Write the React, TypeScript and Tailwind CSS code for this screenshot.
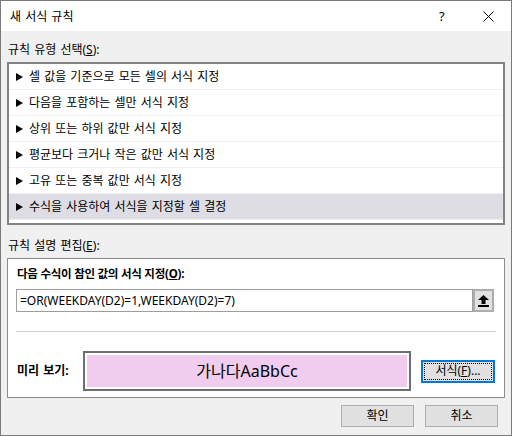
import React from 'react';

const rules = [
  '셀 값을 기준으로 모든 셀의 서식 지정',
  '다음을 포함하는 셀만 서식 지정',
  '상위 또는 하위 값만 서식 지정',
  '평균보다 크거나 작은 값만 서식 지정',
  '고유 또는 중복 값만 서식 지정',
  '수식을 사용하여 서식을 지정할 셀 결정',
];

const font = { fontFamily: '"Noto Sans", "Noto Sans CJK KR", sans-serif' };

const Arrow = () => (
  <svg width="7" height="8" viewBox="0 0 7 8" className="shrink-0">
    <polygon points="0,0 7,4 0,8" fill="#000" />
  </svg>
);

const UploadIcon = () => (
  <svg width="11" height="12" viewBox="0 0 11 12">
    <polygon points="5.5,0 0,5 3.5,5 3.5,9 7.5,9 7.5,5 11,5" fill="#000" />
    <rect x="0" y="10" width="11" height="2" fill="#000" />
  </svg>
);

export default function App() {
  return (
    <div
      className="w-[512px] h-[436px] flex flex-col bg-[#f0f0f0] border border-[#7a7a7a] text-[12px] text-black overflow-hidden [word-spacing:1px]"
      style={font}
    >
      {/* Title bar */}
      <div className="h-[30px] bg-white flex items-center pl-[9px] pr-[17px] shrink-0">
        <span className="flex-1 leading-none pt-[1px]">새 서식 규칙</span>
        <span className="w-[8px] text-[13px] leading-none mr-[36px]">?</span>
        <svg width="11" height="11" viewBox="0 0 11 11">
          <path d="M0.5 0.5 L10.5 10.5 M10.5 0.5 L0.5 10.5" stroke="#000" strokeWidth="1" />
        </svg>
      </div>

      <div className="flex flex-col px-[6px]">
        <div className="h-[31px] pt-[11px] pl-[1px] leading-[16px]">
          규칙 유형 선택(<span className="underline">S</span>):
        </div>

        {/* Rule list */}
        <div className="h-[163px] border-2 border-[#828282] bg-white flex flex-col">
          {rules.map((r, i) => (
            <div
              key={r}
              className={`h-[26px] shrink-0 flex items-center gap-[6px] pl-[7px] border-b border-[#f0f0f0] ${
                i === 5 ? 'bg-[#dddde3]' : ''
              }`}
            >
              <Arrow />
              <span className="leading-none pt-[1px]">{r}</span>
            </div>
          ))}
        </div>

        <div className="h-[33px] pt-[13px] pl-[1px] leading-[16px]">
          규칙 설명 편집(<span className="underline">E</span>):
        </div>

        {/* Description panel */}
        <div className="h-[140px] border border-[#8c8c8c] bg-white flex flex-col">
          <div className="h-[30px] pt-[7px] pl-[9px] font-bold text-[11.5px] tracking-[-0.25px] [word-spacing:0px] leading-[16px]">
            다음 수식이 참인 값의 서식 지정(<span className="underline">O</span>):
          </div>
          <div className="flex ml-[8px] mr-[10px] h-[23px]">
            <div className="flex-1 border border-[#9e9e9e] flex items-center pl-[3px] leading-none">
              =OR(WEEKDAY(D2)=1,WEEKDAY(D2)=7)
            </div>
            <div className="w-[21px] border-2 border-[#adadad] bg-[#e1e1e1] flex items-center justify-center">
              <UploadIcon />
            </div>
          </div>
          <div className="mx-[8px] mt-[19px] border-t border-[#cfcfcf]" />
          <div className="flex items-center mt-[19px] pl-[9px]">
            <span className="w-[66px] font-bold leading-none">미리 보기:</span>
            <div className="w-[328px] h-[40px] border-2 border-[#6e6e6e] p-[2px] bg-white">
              <div className="w-full h-full bg-[#f0cdee] flex items-center justify-center text-[16px] leading-none">
                가나다AaBbCc
              </div>
            </div>
            <div className="ml-[10px] w-[74px] h-[23px] border-2 border-[#0078d7] bg-[#e1e1e1] p-[1px]">
              <div className="w-full h-full border border-dotted border-black flex items-center justify-center leading-none">
                서식(<span className="underline">F</span>)...
              </div>
            </div>
          </div>
        </div>

        {/* Buttons */}
        <div className="flex justify-end gap-[11px] mt-[7px] pr-[7px]">
          <button className="w-[73px] h-[22px] border border-[#adadad] bg-[#e1e1e1] leading-none">확인</button>
          <button className="w-[73px] h-[22px] border border-[#adadad] bg-[#e1e1e1] leading-none">취소</button>
        </div>
      </div>
    </div>
  );
}
